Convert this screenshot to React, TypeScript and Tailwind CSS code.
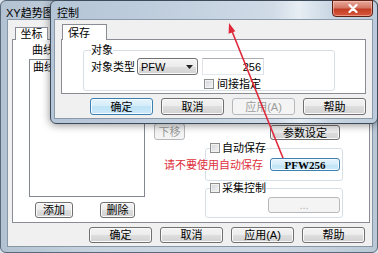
import React from "react";

const FONT = "font-[family-name:'Liberation_Sans','Noto_Sans_CJK_SC',sans-serif]";

type BtnProps = { children?: React.ReactNode; className?: string; kind?: "normal" | "default" | "disabled" };

function Btn({ children, className = "", kind = "normal" }: BtnProps) {
  const base = "flex items-center justify-center rounded-[3px] text-[11px] leading-[12px] shrink-0 ";
  const k =
    kind === "default"
      ? "border border-[#3c7fb1] bg-[linear-gradient(#e6f4fc,#d3ecfa_50%,#c0e3f7_50%,#cbe8f9)] shadow-[inset_0_0_0_1px_#f4fbff] text-black"
      : kind === "disabled"
      ? "border border-[#b5b9bc] bg-[#f4f4f4] text-[#9c9c9c]"
      : "border border-[#707070] bg-[linear-gradient(#f3f3f3,#ececec_50%,#dedede_50%,#d2d2d2)] shadow-[inset_0_0_0_1px_#fafafa] text-black";
  return <div className={base + k + " " + className}>{children}</div>;
}

function Check() {
  return (
    <span className="inline-block w-[10px] h-[10px] shrink-0 border border-[#8e8f8f] bg-[linear-gradient(135deg,#cfd2d7,#f7f7f7)] shadow-[inset_0_0_0_1px_#f2f2f2]" />
  );
}

export default function App() {
  return (
    <div className={"relative w-[378px] h-[253px] overflow-hidden bg-[#d9e3ec] text-black " + FONT}>
      {/* Back window */}
      <div className="absolute left-0 top-0 w-[378px] h-[253px] flex flex-col rounded-[6px] border border-[#5a6a7b] bg-[linear-gradient(to_right,#b3c2d2,#c7d3df_25%,#cfd9e3_70%,#bac8d6)]">
        <div className="h-[19px] shrink-0 pl-[5px] pt-[6px] text-[11px] leading-[12px] text-black">XY趋势图</div>
        <div className="flex-1 ml-[7px] mr-[5px] mb-[6px] bg-[#f0f0f0] shadow-[0_0_0_1px_#8797a8] flex flex-col">
          <div className="pt-[7px] pl-[7px] flex">
            <div className="relative z-[1] w-[33px] h-[13px] -mb-[1px] border border-b-0 border-[#898c95] bg-white text-[11px] leading-[12px] text-center">坐标</div>
          </div>
          <div className="ml-[4px] mr-[2px] h-[184px] border border-[#898c95] bg-white flex items-start">
            {/* left column */}
            <div className="ml-[16px] pt-[4px] flex flex-col">
              <div className="text-[11px] leading-[12px] pl-[3px]">曲线</div>
              <div className="mt-[3px] w-[116px] h-[138px] border border-[#828790] bg-white">
                <div className="mt-[1px] pl-[3px] text-[11px] leading-[12px]">曲线</div>
              </div>
              <div className="mt-[5px] flex">
                <Btn className="ml-[6px] w-[38px] h-[16px]">添加</Btn>
                <Btn className="ml-[27px] w-[35px] h-[16px]">删除</Btn>
              </div>
            </div>
            {/* middle */}
            <div className="ml-[9px] pt-[83px]">
              <Btn kind="disabled" className="w-[31px] h-[17px]">下移</Btn>
            </div>
            {/* right column */}
            <div className="ml-[20px] w-[138px] pt-[85px] flex flex-col">
              <Btn className="ml-[65px] w-[70px] h-[15px]">参数设定</Btn>
              <fieldset className="mt-[2px] min-w-0 border border-[#d5dfe5] rounded-[3px]">
                <legend className="ml-[4px] h-[12px] flex items-center gap-[2px] text-[11px] leading-[12px]">
                  <Check />
                  <span>自动保存</span>
                </legend>
                <div className="mt-[4px] pb-[9px] pr-[2px] flex justify-end items-center">
                  <span className="relative shrink-0 whitespace-nowrap bg-white mr-[7px] text-[11px] leading-[12px] text-[#e0303c]">请不要使用自动保存</span>
                  <Btn kind="default" className="w-[70px] h-[13px] font-[family-name:'Liberation_Serif',serif] font-bold text-[10px]">PFW256</Btn>
                </div>
              </fieldset>
              <fieldset className="mt-[1px] min-w-0 border border-[#d5dfe5] rounded-[3px]">
                <legend className="ml-[4px] h-[12px] flex items-center gap-[2px] text-[11px] leading-[12px]">
                  <Check />
                  <span>采集控制</span>
                </legend>
                <div className="mt-[3px] pb-[4px] flex">
                  <Btn kind="disabled" className="ml-[62px] w-[72px] h-[16px] text-[#b0b0b0]">...</Btn>
                </div>
              </fieldset>
            </div>
          </div>
          <div className="mt-[4px] flex justify-end gap-[8px] pr-[7px]">
            <Btn className="w-[63px] h-[16px]">确定</Btn>
            <Btn className="w-[63px] h-[16px]">取消</Btn>
            <Btn className="w-[63px] h-[16px]">应用(A)</Btn>
            <Btn className="w-[63px] h-[16px]">帮助</Btn>
          </div>
        </div>
      </div>

      {/* Front window */}
      <div className="absolute left-[50px] top-0 w-[328px] h-[124px] flex flex-col rounded-[6px] border border-[#3d4a59] shadow-[0_1px_8px_rgba(0,0,0,0.45)] bg-[linear-gradient(to_right,#b4c5d7,#c2d0df_40%,#d0dbe7_68%,#e7eef4_76%,#c9d6e3_86%,#bccbdb)]">
        <div className="h-[19px] shrink-0 flex items-start">
          <div className="pl-[6px] pt-[6px] text-[11px] leading-[12px]">控制</div>
          <div className="ml-auto mr-[4px] -mt-[1px] shrink-0 w-[41px] h-[17px] rounded-b-[4px] border border-[#5c2117] bg-[linear-gradient(#e9a99b,#d47866_45%,#c23d24_55%,#d9593d)] shadow-[inset_0_0_0_1px_rgba(255,210,200,0.5)] flex items-center justify-center">
            <svg width="10" height="9" viewBox="0 0 10 9">
              <path d="M1.5 1 L8.5 8 M8.5 1 L1.5 8" stroke="#ffffff" strokeWidth="2.2" strokeLinecap="round" />
            </svg>
          </div>
        </div>
        <div className="flex-1 ml-[4px] mr-[5px] mb-[5px] bg-[#f0f0f0] shadow-[0_0_0_1px_#8a9aab] flex flex-col">
          <div className="pt-[4px] pl-[7px] flex">
            <div className="relative z-[1] w-[45px] h-[16px] -mb-[1px] border border-b-0 border-[#898c95] bg-white text-[11px] leading-[12px] pl-[5px] pt-[2px]">保存</div>
          </div>
          <div className="ml-[6px] mr-[6px] h-[55px] border border-[#898c95] bg-white">
            <fieldset className="ml-[21px] mt-[4px] w-[252px] min-w-0 border border-[#d5dfe5] rounded-[3px]">
              <legend className="ml-[7px] h-[12px] text-[11px] leading-[12px]">对象</legend>
              <div className="mt-[2px] h-[17px] flex items-center">
                <div className="ml-[7px] w-[46px] text-[11px] leading-[12px] whitespace-nowrap">对象类型</div>
                <div className="w-[61px] h-[17px] rounded-[3px] border border-[#707070] bg-[linear-gradient(#f3f3f3,#ececec_50%,#dedede_50%,#d2d2d2)] shadow-[inset_0_0_0_1px_#fafafa] flex items-center pl-[3px] pr-[4px]">
                  <span className="text-[11px] leading-[12px]">PFW</span>
                  <svg className="ml-auto" width="7" height="4" viewBox="0 0 7 4">
                    <path d="M0 0 L7 0 L3.5 4 Z" fill="#222" />
                  </svg>
                </div>
                <div className="ml-[4px] w-[62px] h-[17px] border border-[#abadb3] border-l-[#e2e3ea] border-r-[#dbdfe6] border-b-[#e3e9ef] bg-white flex items-center justify-end pr-[2px] text-[11px] leading-[12px]">256</div>
              </div>
              <div className="mt-[3px] ml-[120px] flex items-center gap-[3px] h-[12px] text-[11px] leading-[12px]">
                <Check />
                间接指定
              </div>
            </fieldset>
          </div>
          <div className="mt-[4px] flex justify-end gap-[8px] pr-[6px]">
            <Btn kind="default" className="w-[63px] h-[17px]">确定</Btn>
            <Btn className="w-[63px] h-[17px]">取消</Btn>
            <Btn kind="disabled" className="w-[63px] h-[17px]">应用(A)</Btn>
            <Btn className="w-[63px] h-[17px]">帮助</Btn>
          </div>
        </div>
      </div>

      {/* Red arrow annotation */}
      <svg className="absolute left-0 top-0 pointer-events-none" width="378" height="253" viewBox="0 0 378 253">
        <line x1="283" y1="158" x2="231.5" y2="30" stroke="#e0283a" strokeWidth="1.6" />
        <path d="M229 23 L235.3 31.2 L228.6 33.8 Z" fill="#e0283a" />
      </svg>
    </div>
  );
}
